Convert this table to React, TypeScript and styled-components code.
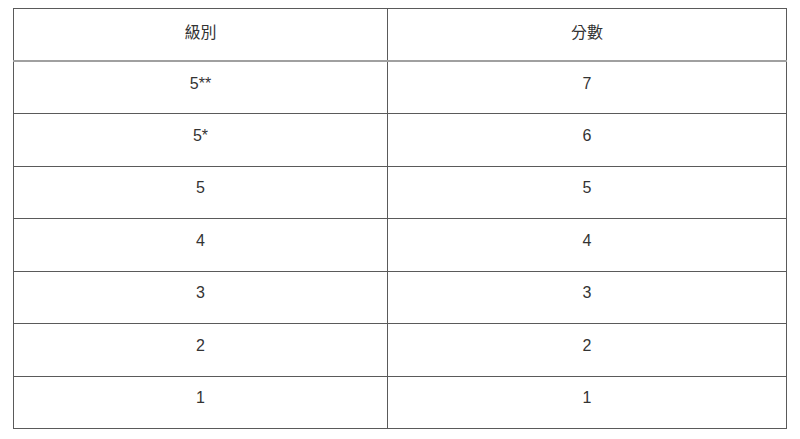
import React from "react";
import styled, { createGlobalStyle } from "styled-components";

const Global = createGlobalStyle`
  html, body { margin: 0; padding: 0; background: #fff; }
  body { font-family: "Liberation Sans", Arial, "Noto Sans CJK TC", sans-serif; }
`;

const Wrap = styled.div`
  padding: 8px 14px 0 13px;
`;

const Table = styled.table`
  width: 773px;
  border-collapse: collapse;
  table-layout: fixed;
  border: 1px solid #222;
`;

const Col = styled.col<{ $w: number }>`
  width: ${(p) => p.$w}px;
`;

const Row = styled.tr`
  height: 52.5px;
`;

const Cell = styled.td<{ $head?: boolean }>`
  border: 1px solid #5a5a5a;
  text-align: center;
  vertical-align: middle;
  font-size: 16px;
  font-weight: normal;
  color: #333;
  padding: 0 0 8px 0;
  font-family: "Liberation Sans", Arial, "Noto Sans CJK TC", sans-serif;
  ${(p) => (p.$head ? "border-bottom: 2px solid #a0a0a0;" : "")}
`;

const rows: [string, string][] = [
  ["5**", "7"],
  ["5*", "6"],
  ["5", "5"],
  ["4", "4"],
  ["3", "3"],
  ["2", "2"],
  ["1", "1"],
];

export default function App() {
  return (
    <>
      <Global />
      <Wrap>
        <Table>
          <colgroup>
            <Col $w={374} />
            <Col $w={399} />
          </colgroup>
          <thead>
            <Row>
              <Cell as="th" $head>級別</Cell>
              <Cell as="th" $head>分數</Cell>
            </Row>
          </thead>
          <tbody>
            {rows.map(([a, b]) => (
              <Row key={a}>
                <Cell>{a}</Cell>
                <Cell>{b}</Cell>
              </Row>
            ))}
          </tbody>
        </Table>
      </Wrap>
    </>
  );
}
